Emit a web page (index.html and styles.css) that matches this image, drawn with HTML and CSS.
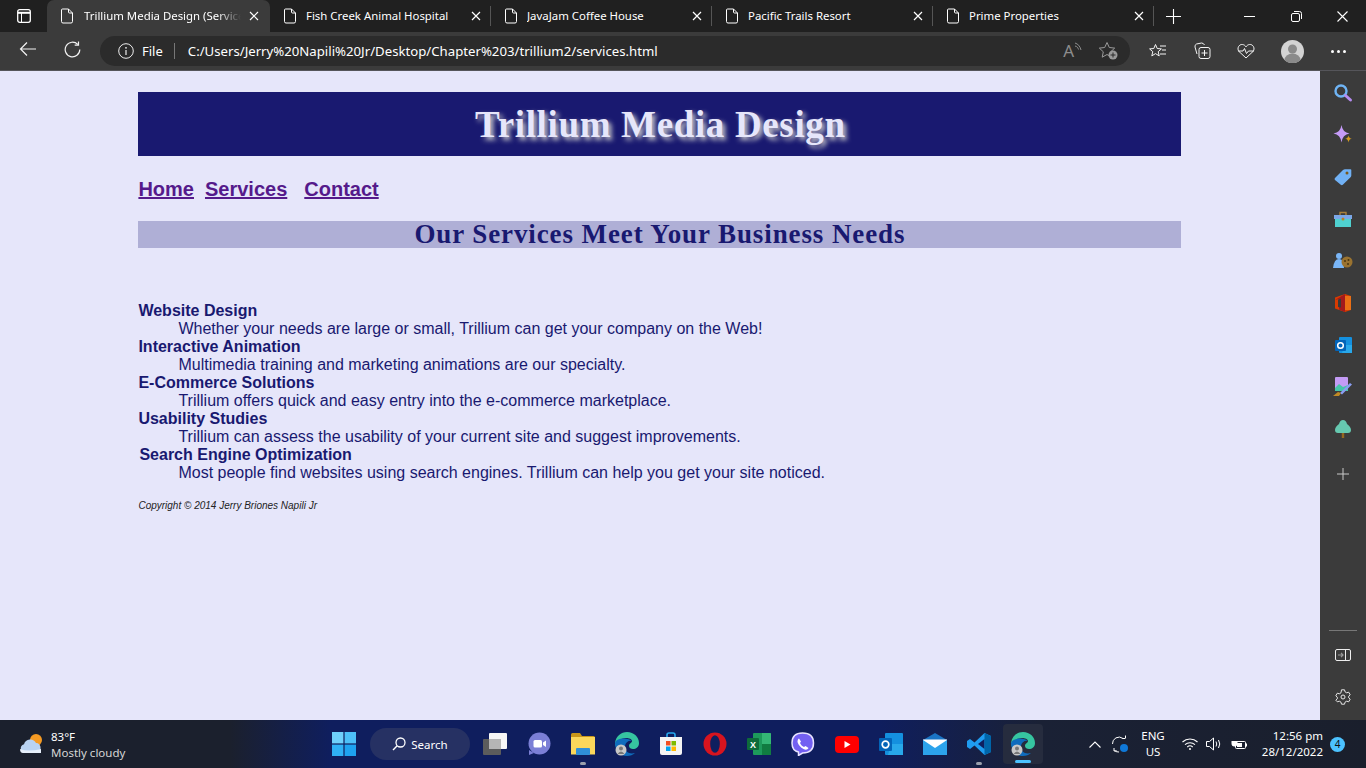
FILE: index.html
```html
<!DOCTYPE html>
<html lang="en">
<head>
<meta charset="utf-8">
<title>Trillium Media Design (Services)</title>
<link rel="stylesheet" href="styles.css">
</head>
<body>
<svg class="defs" width="0" height="0" aria-hidden="true">
  <symbol id="page" viewBox="0 0 14 16"><path d="M2.500 1h6L12.500 5v8.500a1.500 1.500 0 0 1-1.500 1.500H3A1.500 1.500 0 0 1 1.500 13.500V2A1 1 0 0 1 2.500 1zM8.500 1v3a1 1 0 0 0 1 1h3" fill="none" stroke="#fff" stroke-width="1"/></symbol>
  <symbol id="x" viewBox="0 0 10 10"><path d="M1 1l8 8M9 1l-8 8" stroke="#fff" stroke-width="1.200" fill="none"/></symbol>
</svg>
<div class="window">
  <div class="tabstrip">
    <div class="tabmenu"><svg width="14" height="14" viewBox="0 0 14 14"><rect x=".7" y=".7" width="12.600" height="12.600" rx="2" fill="none" stroke="#fff" stroke-width="1.300"/><path d="M1 3.800h12" stroke="#fff" stroke-width="2"/><path d="M4.500 4v9" stroke="#fff"/></svg></div>
    <div class="tab active"><svg class="tabicon" width="14" height="16"><use href="#page"/></svg><span class="tabtext fade">Trillium Media Design (Services)</span><svg class="tabx" width="10" height="10"><use href="#x"/></svg></div>
    <div class="tab"><svg class="tabicon" width="14" height="16"><use href="#page"/></svg><span class="tabtext">Fish Creek Animal Hospital</span><svg class="tabx" width="10" height="10"><use href="#x"/></svg></div>
    <div class="tab sep"><svg class="tabicon" width="14" height="16"><use href="#page"/></svg><span class="tabtext">JavaJam Coffee House</span><svg class="tabx" width="10" height="10"><use href="#x"/></svg></div>
    <div class="tab sep"><svg class="tabicon" width="14" height="16"><use href="#page"/></svg><span class="tabtext">Pacific Trails Resort</span><svg class="tabx" width="10" height="10"><use href="#x"/></svg></div>
    <div class="tab sep"><svg class="tabicon" width="14" height="16"><use href="#page"/></svg><span class="tabtext">Prime Properties</span><svg class="tabx" width="10" height="10"><use href="#x"/></svg></div>
    <div class="newtab"><svg width="15" height="15" viewBox="0 0 15 15"><path d="M7.500 0v15M0 7.500h15" stroke="#fff" stroke-width="1.100"/></svg></div>
    <div class="winctrl">
      <span class="wc"><svg width="11" height="11" viewBox="0 0 11 11"><path d="M0 5.500h11" stroke="#fff"/></svg></span>
      <span class="wc"><svg width="11" height="11" viewBox="0 0 11 11"><rect x=".5" y="2.500" width="8" height="8" rx="1.500" fill="none" stroke="#fff"/><path d="M3 .5h5.500a2 2 0 0 1 2 2V8" fill="none" stroke="#fff"/></svg></span>
      <span class="wc"><svg width="11" height="11" viewBox="0 0 11 11"><path d="M.5.500l10 10M10.500.500l-10 10" stroke="#fff" stroke-width="1.100"/></svg></span>
    </div>
  </div>
  <div class="toolbar">
    <span class="navbtn"><svg width="18" height="16" viewBox="0 0 18 16"><path d="M17 8H1.500M8 1.500L1.500 8 8 14.500" fill="none" stroke="#f2f2f2" stroke-width="1.200"/></svg></span>
    <span class="navbtn"><svg width="17" height="17" viewBox="0 0 17 17"><path d="M13.800 3.500A7.300 7.300 0 1 0 15.800 8.500" fill="none" stroke="#f2f2f2" stroke-width="1.200"/><path d="M14.500 .5v3.700h-3.800" fill="none" stroke="#f2f2f2" stroke-width="1.200"/></svg></span>
    <div class="address">
      <svg class="info" width="16" height="16" viewBox="0 0 16 16"><circle cx="8" cy="8" r="7.300" fill="none" stroke="#eee" stroke-width="1"/><path d="M8 7v5" stroke="#eee" stroke-width="1.200"/><circle cx="8" cy="4.800" r=".9" fill="#eee"/></svg>
      <span class="filelabel">File</span>
      <span class="addrsep"></span>
      <span class="url">C:/Users/Jerry%20Napili%20Jr/Desktop/Chapter%203/trillium2/services.html</span>
      <span class="readaloud"><span class="biga">A</span><svg width="8" height="10" viewBox="0 0 8 10"><path d="M1 1c3 1 5 3 6 7M1 4c2 .5 3 1.500 3.500 3.500" fill="none" stroke="#8d8d8d"/></svg></span>
      <svg class="favadd" width="22" height="20" viewBox="0 0 22 20"><path d="M9 1.500l2.300 5 5.400.6-4 3.700 1.100 5.400L9 13.500 4.200 16.200l1.100-5.400-4-3.700 5.400-.6z" fill="none" stroke="#9a9a9a"/><circle cx="15" cy="14" r="4.500" fill="#9a9a9a"/><path d="M15 11.500v5M12.500 14h5" stroke="#2b2b2b"/></svg>
    </div>
    <div class="tools">
      <span class="tool"><svg width="18" height="17" viewBox="0 0 18 17"><path d="M6.500 1.500l1.700 4 4.200.4-3.200 2.800 1 4.200-3.700-2.300-3.700 2.300 1-4.200L.6 5.900l4.200-.4z" fill="none" stroke="#f5f5f5"/><path d="M11 3h6M13 7h4M11 11h6" stroke="#f5f5f5"/></svg></span>
      <span class="tool"><svg width="18" height="18" viewBox="0 0 18 18"><path d="M4 12L2 5q-.5-2 1.500-3l5-1q2 0 3 2" fill="none" stroke="#f5f5f5"/><rect x="6" y="5.500" width="11" height="11" rx="2" fill="none" stroke="#f5f5f5"/><path d="M11.500 8v6M8.500 11h6" stroke="#f5f5f5"/></svg></span>
      <span class="tool"><svg width="18" height="16" viewBox="0 0 18 16"><path d="M9 15L2 8.500C-.5 5.500 2 1 5.500 1.500 7.200 1.700 8.300 2.700 9 3.800 9.700 2.700 10.800 1.700 12.500 1.500 16 1 18.500 5.500 16 8.500z" fill="none" stroke="#f5f5f5"/><path d="M1 8h5l1.500-2.500 2 5L11.500 8H17" fill="none" stroke="#f5f5f5"/></svg></span>
      <span class="avatar"><svg width="23" height="23" viewBox="0 0 23 23"><circle cx="11.500" cy="11.500" r="11.500" fill="#d3d3d3"/><circle cx="11.500" cy="9" r="4.500" fill="#8a8a8a"/><path d="M3.500 20a8 6.500 0 0 1 16 0 11.500 11.500 0 0 1-16 0z" fill="#8a8a8a"/></svg></span>
      <span class="tool more"><i></i><i></i><i></i></span>
    </div>
  </div>
  <div class="main">
    <div class="page">
      <div class="wrapper">
        <header class="site-head"><h1>Trillium Media Design</h1></header>
        <nav class="site-nav"><a href="#">Home</a><a href="#">Services</a><a href="#" class="wide">Contact</a></nav>
        <h2>Our Services Meet Your Business Needs</h2>
        <dl>
          <dt>Website Design</dt>
          <dd>Whether your needs are large or small, Trillium can get your company on the Web!</dd>
          <dt>Interactive Animation</dt>
          <dd>Multimedia training and marketing animations are our specialty.</dd>
          <dt>E-Commerce Solutions</dt>
          <dd>Trillium offers quick and easy entry into the e-commerce marketplace.</dd>
          <dt>Usability Studies</dt>
          <dd>Trillium can assess the usability of your current site and suggest improvements.</dd>
          <dt class="nudge">Search Engine Optimization</dt>
          <dd>Most people find websites using search engines. Trillium can help you get your site noticed.</dd>
        </dl>
        <footer class="copy">Copyright © 2014 Jerry Briones Napili Jr</footer>
      </div>
    </div>
    <aside class="sidebar">
      <div class="sideicons">
        <svg width="20" height="20" viewBox="0 0 20 20"><circle cx="8" cy="8" r="5.500" fill="none" stroke="#6fb4f5" stroke-width="2.400"/><path d="M12.500 12.500l5 4.500" stroke="#b68cf0" stroke-width="3" stroke-linecap="round"/></svg>
        <svg width="20" height="20" viewBox="0 0 20 20"><path d="M8.500 0q1 7.500 8 8.500-7 1-8 9-1-8-8-9 7-1 8-8.500z" fill="#c59bf7"/><path d="M15.500 10.500q.5 3 3.500 3.300-3 .3-3.500 3.700-.5-3.400-3.500-3.700 3-.3 3.500-3.300z" fill="#d39a1f"/></svg>
        <svg width="18" height="18" viewBox="0 0 18 18"><path d="M1 10l8-8q1-.8 2-.8h5.500q.8 0 .8.800V7.500q0 1.200-1 2l-7.500 7.300q-1 .8-2 0L1 12q-1-1 0-2z" fill="#71b1f5"/><circle cx="13" cy="5" r="1.500" fill="#7b5a1e"/></svg>
        <svg width="18" height="18" viewBox="0 0 18 18"><path d="M6 5V2.500h6V5" fill="none" stroke="#a9803a" stroke-width="1.400"/><rect x="0" y="5" width="18" height="4" fill="#7ba7e8"/><rect x="1" y="9" width="16" height="8" fill="#4fd1d0"/><circle cx="9" cy="9" r="1.500" fill="#b78427"/></svg>
        <svg width="20" height="18" viewBox="0 0 20 18"><circle cx="6" cy="4" r="3" fill="#7ab6f7"/><path d="M0 16q1-9 6-9t5 9z" fill="#7ab6f7"/><circle cx="14" cy="10" r="5.500" fill="#9a7330"/><circle cx="12" cy="9" r="1" fill="#4a3510"/><circle cx="15.500" cy="8" r="1" fill="#4a3510"/><circle cx="15" cy="12" r="1" fill="#4a3510"/></svg>
        <svg width="16" height="18" viewBox="0 0 16 18"><path d="M0 3.500L10 0l6 2v14l-6 2-10-3.500z" fill="#d83b01"/><path d="M10 0v18L4 15.500V5L0 6z" fill="#a3191c"/><path d="M3 5.500L6 4.800v8.700l-3-.6z" fill="#3a3a3a"/><path d="M10 2l6 0v14l-6 0z" fill="#eb6f14"/></svg>
        <svg width="17" height="16" viewBox="0 0 17 16"><rect x="4" y="0" width="13" height="16" rx="1" fill="#1490df"/><path d="M10 8h7v8H7z" fill="#28a8ea"/><rect x="0" y="3" width="11" height="11" rx="1" fill="#0364b8"/><circle cx="5.500" cy="8.500" r="2.800" fill="none" stroke="#fff" stroke-width="1.500"/></svg>
        <svg width="20" height="20" viewBox="0 0 20 20"><rect x="2" y="0" width="13" height="14" rx="1" fill="#c39bf5"/><path d="M2 11l4-4 4 3 5-2v6H2z" fill="#45c5a9"/><path d="M7 16l10-10 2 1.500-10 10z" fill="#8a9df2"/><path d="M5 15l3 1-2 3H0z" fill="#c08a25"/></svg>
        <svg width="16" height="18" viewBox="0 0 16 18"><path d="M8 0q3 0 4 4 4 3 4 6 0 3-3 3H3q-3 0-3-3 0-3 4-6 1-4 4-4z" fill="#66c9b0"/><rect x="6.800" y="13" width="2.400" height="5" fill="#94681f"/></svg>
        <svg class="sideplus" width="12" height="12" viewBox="0 0 12 12"><path d="M6 0v12M0 6h12" stroke="#c9c9c9" stroke-width="1"/></svg>
      </div>
      <div class="sidebottom">
        <span class="siderule"></span>
        <svg class="sidepanel" width="16" height="12" viewBox="0 0 16 12"><rect x=".5" y=".5" width="15" height="11" rx="1.500" fill="none" stroke="#eee"/><path d="M10.500 1v10" stroke="#eee"/><path d="M3 6h5M6 3.800L8 6 6 8.200" fill="none" stroke="#9a9a9a" stroke-width="1.200"/></svg>
        <svg width="16" height="16" viewBox="0 0 16 16"><path d="M6.500 .8h3l.5 2 1.700 1 2-.6 1.500 2.600-1.500 1.400v1.600l1.500 1.400-1.500 2.600-2-.6-1.700 1-.5 2h-3l-.5-2-1.700-1-2 .6L.8 11.200l1.500-1.400V8.200L.8 6.800 2.300 4.200l2 .6 1.700-1z" fill="none" stroke="#e6e6e6"/><circle cx="8" cy="8" r="2" fill="none" stroke="#e6e6e6"/></svg>
      </div>
    </aside>
  </div>
  <div class="taskbar">
    <div class="weather">
      <svg width="26" height="22" viewBox="0 0 26 22"><circle cx="17" cy="7" r="6" fill="#f59a23"/><path d="M6 20a4.500 4.500 0 0 1-1-8.800A6.500 6.500 0 0 1 17 10a4.500 4.500 0 0 1 4.500 5v5z" fill="#b9d3f3"/><path d="M1 16q8 3 21 0v4H4q-3 0-3-4z" fill="#e7effa"/></svg>
      <div class="wtext"><span>83°F</span><span class="dim">Mostly cloudy</span></div>
    </div>
    <div class="centre">
      <span class="ti"><svg width="24" height="24" viewBox="0 0 24 24"><rect width="11.400" height="11.400" fill="#6fd0fb"/><rect x="12.600" width="11.400" height="11.400" fill="#4dc0f8"/><rect y="12.600" width="11.400" height="11.400" fill="#2fb0f5"/><rect x="12.600" y="12.600" width="11.400" height="11.400" fill="#1ea2f0"/></svg></span>
      <span class="searchpill"><svg width="14" height="14" viewBox="0 0 14 14"><circle cx="8.500" cy="5.500" r="4.500" fill="none" stroke="#fff" stroke-width="1.300"/><path d="M5.200 8.800L1 13" stroke="#fff" stroke-width="1.400"/></svg>Search</span>
      <span class="ti"><svg width="24" height="22" viewBox="0 0 24 22"><rect x="0" y="6" width="18" height="16" rx="1" fill="#5c5c5c"/><rect x="6" y="0" width="18" height="16" rx="1" fill="#f6f6f6"/><rect x="6" y="6" width="12" height="10" fill="#b5b5b5"/></svg></span>
      <span class="ti"><svg width="24" height="24" viewBox="0 0 24 24"><circle cx="12.500" cy="11.500" r="11" fill="#7b7fd6"/><path d="M2 18v5l5-2z" fill="#7b7fd6"/><rect x="6.500" y="8" width="8.500" height="7.500" rx="1.500" fill="#fff"/><path d="M16 10.500l3-2v6.500l-3-2z" fill="#fff"/></svg></span>
      <span class="ti dot"><svg width="24" height="22" viewBox="0 0 24 22"><path d="M0 1.500Q0 0 1.500 0H9l2 3h11.500Q24 3 24 4.500V21H0z" fill="#c9961a"/><rect y="4" width="24" height="17.500" fill="#fbd75b"/><rect x="5" y="15" width="14" height="7" rx="1" fill="#2f8fd8"/></svg></span>
      <span class="ti"><svg width="24" height="24" viewBox="0 0 24 24"><path d="M0 11C1 4 6 0 12 0c7 0 12 5 12 11 0 4-3 6-6 6-2 0-4-1-4-3 0-3 3-3 3-5S14 6 11 6C5 6 1 11 0 15z" fill="#36c5a0"/><path d="M0 11c0 7 5 13 12 13 3 0 6-1 8-3-7 2-11-3-10-7 .5-4 4-6 7-5-3-3-15-4-17 2z" fill="#0f6cbd"/><circle cx="6" cy="18" r="5.500" fill="#c9c9c9"/><circle cx="6" cy="16.500" r="2" fill="#777"/><path d="M2.500 22q3.500-5 7 0z" fill="#777"/></svg></span>
      <span class="ti"><svg width="24" height="24" viewBox="0 0 24 24"><path d="M8 5V3a2 2 0 0 1 2-2h4a2 2 0 0 1 2 2v2" fill="none" stroke="#27a9ef" stroke-width="1.600"/><path d="M1 5h22v16a2 2 0 0 1-2 2H3a2 2 0 0 1-2-2z" fill="#f4f4f4"/><rect x="7" y="9" width="4.500" height="4.500" fill="#f25022"/><rect x="12.500" y="9" width="4.500" height="4.500" fill="#7fba00"/><rect x="7" y="14.500" width="4.500" height="4.500" fill="#00a4ef"/><rect x="12.500" y="14.500" width="4.500" height="4.500" fill="#ffb900"/></svg></span>
      <span class="ti"><svg width="24" height="24" viewBox="0 0 24 24"><ellipse cx="12" cy="12" rx="11.500" ry="11.500" fill="#d7141f"/><ellipse cx="12" cy="12" rx="4.800" ry="8.800" fill="#0f1f5f"/></svg></span>
      <span class="ti"><svg width="24" height="22" viewBox="0 0 24 22"><rect x="6" y="0" width="18" height="22" rx="1" fill="#1d9a5b"/><path d="M15 0h8a1 1 0 0 1 1 1v10h-9z" fill="#34b775"/><path d="M15 11h9v10a1 1 0 0 1-1 1h-8z" fill="#107c41"/><rect x="0" y="5" width="12" height="12" rx="1" fill="#0e6b3a"/><text class="xl" x="6" y="14.500">X</text></svg></span>
      <span class="ti"><svg width="24" height="24" viewBox="0 0 24 24"><path d="M11.500 1c7 0 11 3 11 10s-4 10-11 10l-4 2.500V20C3 19 1 16 1 11 1 4 5 1 11.500 1z" fill="#7360f2" stroke="#e8e4ff" stroke-width="1.500"/><path d="M8 6.500l2 3-1 1.500c1 2 2 3 4 4l1.500-1 3 2c-1 2-3 2-5 1-3-1.500-5-4-6-7 0-2 .5-3 1.500-3.500z" fill="#fff"/></svg></span>
      <span class="ti"><svg width="24" height="17" viewBox="0 0 24 17"><rect width="24" height="17" rx="4" fill="#f00"/><path d="M9.500 5l6 3.500-6 3.500z" fill="#fff"/></svg></span>
      <span class="ti"><svg width="24" height="24" viewBox="0 0 24 24"><rect x="6" y="1" width="18" height="22" rx="1" fill="#1490df"/><path d="M12 12h12v11H9z" fill="#28a8ea"/><rect x="0" y="6" width="13" height="13" rx="1" fill="#0364b8"/><circle cx="6.500" cy="12.500" r="3.300" fill="none" stroke="#fff" stroke-width="1.700"/></svg></span>
      <span class="ti"><svg width="24" height="22" viewBox="0 0 24 22"><path d="M12 0l12 7H0z" fill="#1a74c4"/><rect y="7" width="24" height="15" fill="#2ca3ec"/><path d="M0 7l12 8 12-8v-.5H0z" fill="#fff"/></svg></span>
      <span class="ti dot"><svg width="24" height="24" viewBox="0 0 24 24"><path d="M17.500 1L24 4v16l-6.500 3-10-9.500L3 17l-3-2V9l3-2 4.500 3.500z" fill="#1f9cf0"/><path d="M17.500 7v10l-6.500-5z" fill="#0f1f5f"/><path d="M17.500 1L24 4v16l-6.500 3z" fill="#0065a9"/></svg></span>
      <span class="ti active-app"><svg width="24" height="24" viewBox="0 0 24 24"><path d="M0 11C1 4 6 0 12 0c7 0 12 5 12 11 0 4-3 6-6 6-2 0-4-1-4-3 0-3 3-3 3-5S14 6 11 6C5 6 1 11 0 15z" fill="#36c5a0"/><path d="M0 11c0 7 5 13 12 13 3 0 6-1 8-3-7 2-11-3-10-7 .5-4 4-6 7-5-3-3-15-4-17 2z" fill="#0f6cbd"/><circle cx="6" cy="18" r="5.500" fill="#c9c9c9"/><circle cx="6" cy="16.500" r="2" fill="#777"/><path d="M2.500 22q3.500-5 7 0z" fill="#777"/></svg></span>
    </div>
    <div class="tray">
      <svg class="chev" width="12" height="7" viewBox="0 0 12 7"><path d="M.5 6.500L6 1l5.500 5.500" fill="none" stroke="#fff" stroke-width="1.100"/></svg>
      <svg class="sync" width="18" height="18" viewBox="0 0 18 18"><path d="M1.500 9A6.500 6.500 0 0 1 12 3.500M14.500 3V.5M14.500 3.500H11.500M3 16h3M3 16v-3M3.500 15.500A6 6 0 0 0 8 17" fill="none" stroke="#fff"/><circle cx="13" cy="13" r="4" fill="#0f78d8"/></svg>
      <div class="lang"><span>ENG</span><span>US</span></div>
      <svg class="wifi" width="16" height="12" viewBox="0 0 16 12"><path d="M.5 4a11 11 0 0 1 15 0M3 6.700a7.500 7.500 0 0 1 10 0M5.300 9a4 4 0 0 1 5.400 0" fill="none" stroke="#fff" stroke-width="1.100"/><circle cx="8" cy="11" r="1" fill="#fff"/></svg>
      <svg class="vol" width="16" height="14" viewBox="0 0 16 14"><path d="M.5 4.500h3L7.500 1v12l-4-3.500h-3z" fill="none" stroke="#fff"/><path d="M10 4.500q1.500 2.500 0 5M12.500 3q2.500 4 0 8" fill="none" stroke="#fff"/></svg>
      <svg class="batt" width="16" height="13" viewBox="0 0 16 13"><path d="M2 0v3M4.500 0v3M0.500 3h6v2.500a3 3 0 0 1-6 0z" fill="#fff"/><rect x="4.500" y="3.500" width="10" height="7" rx="1" fill="none" stroke="#fff"/><rect x="6" y="5" width="5" height="4" fill="#fff"/><path d="M15.500 5.500v3" stroke="#fff"/></svg>
      <div class="clock"><span>12:56 pm</span><span>28/12/2022</span></div>
      <span class="badge">4</span>
    </div>
  </div>
</div>
</body>
</html>
```
FILE: styles.css
```css
* { box-sizing: border-box; }
html, body { margin: 0; height: 100%; overflow: hidden; }
body { font-family: "Noto Sans", "Open Sans", sans-serif; background: #202020; }
.defs { position: absolute; }
svg { display: block; flex: none; }
.window { width: 1366px; height: 768px; display: flex; flex-direction: column; }

.tabstrip { height: 32px; background: #202020; display: flex; align-items: flex-end; color: #fff; font-size: 11.400px; flex: none; }
.tabmenu { width: 47px; height: 32px; display: flex; align-items: center; justify-content: center; }
.tab { width: 221px; height: 32px; padding: 0 10px 0 13px; display: flex; align-items: center; position: relative; }
.tab.active { width: 223px; padding-right: 11px; background: #3b3b3b; border-radius: 7px 7px 0 0; }
.tab.sep::before { content: ""; position: absolute; left: -1px; top: 6px; width: 1px; height: 20px; background: #555; }
.tabicon { margin-right: 9px; }
.tab.active .tabicon { margin-right: 10px; }
.tabtext { flex: 1; white-space: nowrap; overflow: hidden; min-width: 0; padding-bottom: 2px; }
.fade { -webkit-mask-image: linear-gradient(to right, #000 85%, transparent 100%); mask-image: linear-gradient(to right, #000 85%, transparent 100%); }
.tabx { margin-left: 8px; }
.newtab { width: 38px; height: 32px; display: flex; align-items: center; justify-content: center; position: relative; }
.newtab::before { content: ""; position: absolute; left: -1px; top: 6px; width: 1px; height: 20px; background: #555; }
.winctrl { margin-left: auto; display: flex; height: 32px; }
.wc { width: 46.500px; display: flex; align-items: center; justify-content: center; }

.toolbar { height: 38px; background: #3b3b3b; display: flex; align-items: center; padding-bottom: 4px; flex: none; }
.navbtn { display: flex; justify-content: center; }
.navbtn:first-child { width: 56px; }
.navbtn + .navbtn { width: 32px; margin-right: 12px; }
.address { width: 1030px; height: 30px; margin-top: 4px; background: #2b2b2b; border-radius: 15px; display: flex; align-items: center; padding-left: 18px; color: #fff; font-size: 13px; }
.info { margin-right: 8px; }
.filelabel { margin-right: 11px; }
.addrsep { width: 1px; height: 16px; background: #777; margin-right: 13px; }
.url { flex: 1; white-space: nowrap; font-size: 13.200px; }
.readaloud { display: flex; align-items: flex-start; margin-right: 16px; color: #8d8d8d; }
.biga { font-size: 17px; line-height: 18px; }
.favadd { margin-right: 10px; }
.tools { display: flex; align-items: center; margin-top: 4px; flex: 1; }
.tool { width: 44px; display: flex; justify-content: center; }
.tools .tool:first-child { margin-left: 6px; }
.avatar { width: 48px; display: flex; justify-content: center; }
.more { gap: 3px; }
.more i { width: 3px; height: 3px; border-radius: 50%; background: #fff; display: block; }

.main { flex: 1; display: flex; min-height: 0; border-top: 1px solid #55555a; }
.page { flex: 1; background: #e6e6fa; padding: 21px .2px 0 0; min-width: 0; }
.wrapper { width: 1043px; margin: 0 auto; color: #191970; font-family: "Liberation Sans", Arial, sans-serif; }
.site-head { height: 64px; background: #191970; display: flex; align-items: center; justify-content: center; }
h1 { margin: 0 0 0 1px; font: bold 37px/1 "Liberation Serif", serif; letter-spacing: .65px; color: #e6e6fa; text-shadow: 3px 3px 5px #ccc; }
.site-nav { margin-top: 21px; height: 24px; display: flex; gap: 11px; font-size: 20px; line-height: 24px; font-weight: bold; }
.site-nav a { color: #551a8b; }
.site-nav a.wide { margin-left: 6px; }
h2 { margin: 20px 0 0; height: 27px; background: #afafd6; text-align: center; font: bold 27px/27px "Liberation Serif", serif; letter-spacing: .9px; color: #191970; }
dl { margin: 54px 0 0; font-size: 16px; line-height: 18px; }
dt { font-weight: bold; }
dt.nudge { padding-left: 1px; }
dd { margin: 0 0 0 40px; }
.copy { margin-top: 18px; font-size: 10px; line-height: 12px; font-style: italic; color: #222; }

.sidebar { width: 46px; background: #3b3b3b; display: flex; flex-direction: column; align-items: center; justify-content: space-between; padding: 12px 0 15px; flex: none; }
.sideicons { display: flex; flex-direction: column; align-items: center; }
.sideicons svg { height: 20px; margin-bottom: 22px; }
.sideicons .sideplus { height: 12px; margin: 7px 0 0; }
.sidebottom { display: flex; flex-direction: column; align-items: center; }
.siderule { width: 28px; height: 1px; background: #777; }
.sidepanel { margin: 18px 0 28px; }

.taskbar { height: 48px; flex: none; display: flex; align-items: center; position: relative; color: #fff; font-size: 11.500px; background: linear-gradient(to right, #1b202d 0, #1b202d 230px, #0f1e5e 330px, #0f1e5e 880px, #1a2135 1040px, #1a1f2c 1366px); }
.weather { width: 322px; padding-left: 19px; display: flex; align-items: center; gap: 6px; }
.wtext { display: flex; flex-direction: column; line-height: 16px; padding-top: 2px; }
.dim { color: #d6d6d6; }
.centre { display: flex; align-items: center; height: 48px; }
.ti { width: 44px; height: 40px; display: flex; align-items: center; justify-content: center; position: relative; }
.ti:first-child { margin-right: 4px; }
.searchpill { width: 100px; height: 32px; border-radius: 16px; background: #263163; display: flex; align-items: center; justify-content: center; gap: 5px; font-size: 11.500px; margin-right: 3px; }
.dot::after { content: ""; position: absolute; bottom: -1px; left: 19px; width: 6px; height: 3px; border-radius: 2px; background: #9aa0ad; }
.active-app { width: 40px; margin-left: 2px; background: #262c3e; border-radius: 4px; }
.active-app::after { content: ""; position: absolute; bottom: 1px; left: 12px; width: 16px; height: 3px; border-radius: 2px; background: #4cc2ff; }
.xl { font: bold 9px "Liberation Sans", sans-serif; fill: #fff; text-anchor: middle; }
.tray { position: absolute; left: 1089px; top: 0; height: 48px; width: 277px; display: flex; align-items: center; }
.sync { margin-left: 10px; }
.lang { width: 36px; margin-left: 6px; display: flex; flex-direction: column; align-items: center; line-height: 16px; }
.wifi { margin-left: 11px; }
.vol { margin-left: 8px; }
.batt { margin-left: 9px; }
.clock { width: 70px; margin-left: 6px; text-align: right; display: flex; flex-direction: column; line-height: 16px; }
.badge { width: 15px; height: 15px; margin-left: 7px; border-radius: 50%; background: #4cc2ff; color: #111; font-size: 10px; display: flex; align-items: center; justify-content: center; }
```
